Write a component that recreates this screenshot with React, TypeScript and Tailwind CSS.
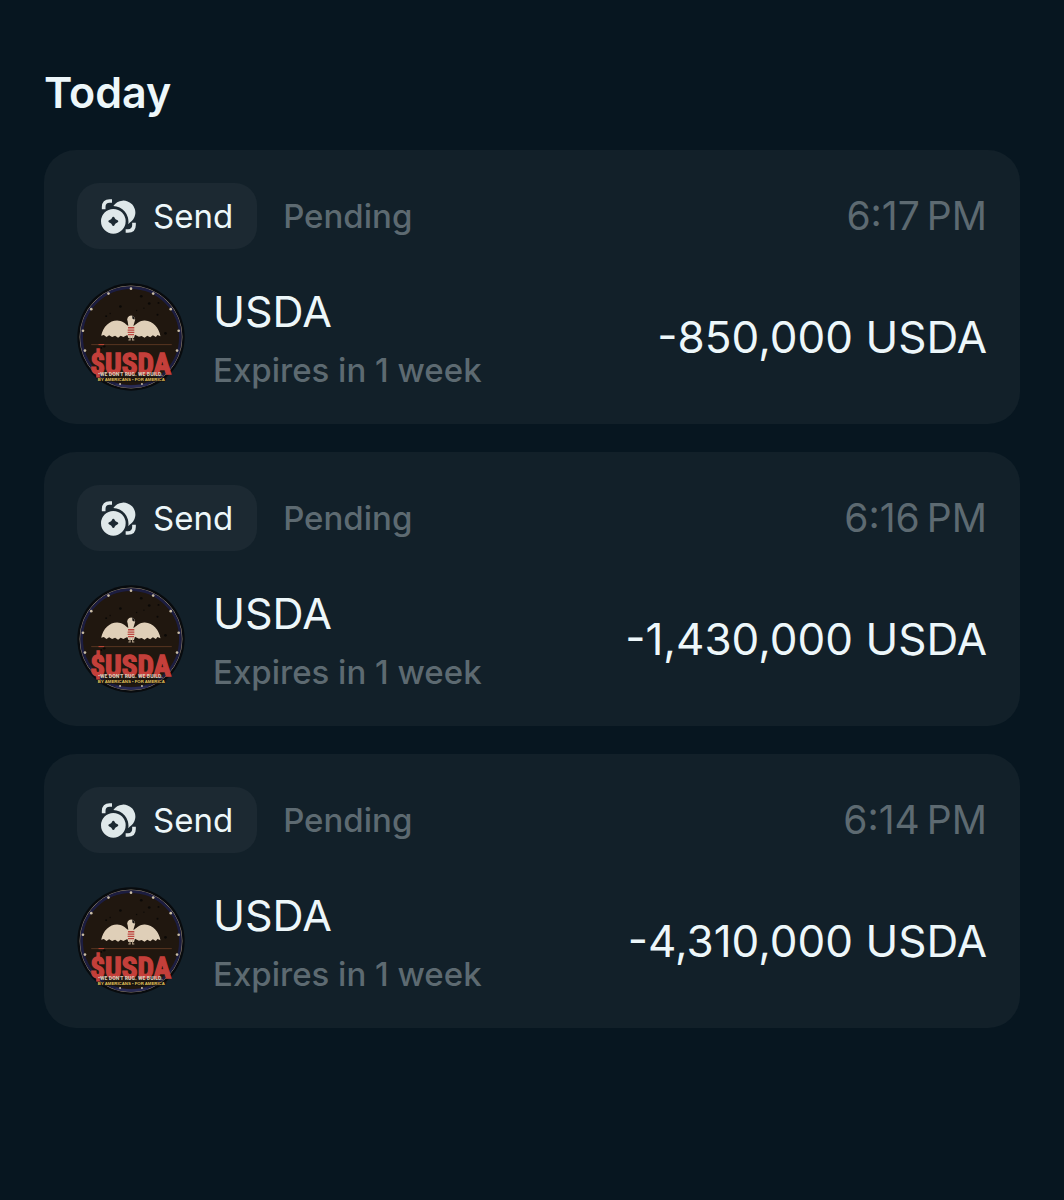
const transactions = [
  { time: "6:17\u202fPM", amount: "-850,000 USDA" },
  { time: "6:16\u202fPM", amount: "-1,430,000 USDA" },
  { time: "6:14\u202fPM", amount: "-4,310,000 USDA" },
];

const rivets = [
  [115, 54], [63, 101], [38, 166], [44, 226], [183, 39], [250, 54], [303, 101], [327, 166], [322, 226],
];

const specks = [
  [214, 62, 4], [238, 84, 4], [151, 93, 4], [266, 82, 3], [108, 122, 3], [120, 114, 2], [263, 118, 3], [287, 174, 4],
  [200, 105, 2], [102, 213, 4], [93, 218, 3], [222, 98, 2],
];

function SendIcon() {
  return (
    <svg viewBox="0 0 108 108" className="size-9 shrink-0" fill="#dfe8ea" aria-hidden="true">
      <path d="M37 24A36 36 0 1 1 85 75Q82 79 82 77A47 47 0 0 0 37 24Z" />
      <path
        fillRule="evenodd"
        d="M37 33a37 37 0 1 0 0 74a37 37 0 0 0 0-74Zm0 23q3 0 4 4q2 5 7 6q4 1 4 4q0 3-4 4q-5 1-7 6q-1 4-4 4q-3 0-4-4q-2-5-7-6q-4-1-4-4q0-3 4-4q5-1 7-6q1-4 4-4Z"
      />
      <path
        d="M8 34V27Q8 9 26 9H33M99 74V81Q99 99 81 99H74"
        fill="none"
        stroke="#dfe8ea"
        strokeWidth="11"
      />
    </svg>
  );
}

function TokenLogo() {
  return (
    <svg viewBox="20 22 326 326" className="size-[108px] shrink-0" role="img" aria-label="USDA token">
      <circle cx="183" cy="185" r="162" fill="#080b0e" />
      <circle cx="183" cy="185" r="154" fill="#20170f" stroke="#85796a" strokeWidth="3" />
      <circle cx="183" cy="185" r="149" fill="none" stroke="#1c1d40" strokeWidth="8" />
      {specks.map(([x, y, r]) => (
        <circle key={`${x}-${y}`} cx={x} cy={y} r={r} fill="#0b0907" />
      ))}
      {rivets.map(([x, y]) => (
        <circle key={`${x}-${y}`} cx={x} cy={y} r="4" fill="#c9bda6" />
      ))}

      {/* eagle */}
      <path
        d="M93 181C99 153 118 135 141 135C156 135 165 144 174 151L192 151C202 143 211 134 225 135C250 137 268 157 272 183L263 179L258 185L249 180L241 186L232 181L224 187L215 182L207 184L195 178L192 188H175L172 179L160 185L152 181L144 187L135 181L126 185L117 180L109 185L101 179Z"
        fill="#dfcfb8"
      />
      <path d="M175 152L173 138A12 12 0 1 1 194 138L190 152Z" fill="#dfcfb8" />
      <path d="M187 120Q197 125 193 133L187 129Z" fill="#171514" />
      <path d="M174 157h19M173 164h20M173 171h20M174 178h18" stroke="#bd4640" strokeWidth="4" />
      <path d="M180 182v12m8-12v12m-13 0h7m4 0h7" stroke="#b9a78f" strokeWidth="3" />
      <path d="M63 208H306" stroke="#75452a" strokeWidth="2" />
      <path d="M85 208H102" stroke="#c64735" strokeWidth="3" />

      <text x="182" y="297" textAnchor="middle" fill="#c43f3a" stroke="#c43f3a" strokeWidth="4" className="font-['Roboto_Condensed',sans-serif] text-[88px] font-bold">
        $USDA
      </text>
      <text x="181" y="304" textAnchor="middle" fill="#d6cab9" className="font-['Roboto_Condensed',sans-serif] text-[18px] font-bold">
        •WE DON'T RUG. WE BUILD.
      </text>
      <path d="M76 308H292L284 320H88Z" fill="#151313" />
      <text x="184" y="319" textAnchor="middle" fill="#e4c45a" className="font-['Liberation_Sans',sans-serif] text-[13px] font-bold">
        BY AMERICANS • FOR AMERICA
      </text>
      <path d="M136 329Q184 340 233 329" fill="none" stroke="#292b54" strokeWidth="7" />
      <circle cx="150" cy="327" r="3" fill="#c9bda6" />
      <circle cx="216" cy="327" r="3" fill="#c9bda6" />
    </svg>
  );
}

export default function App() {
  return (
    <main className="min-h-screen bg-[#071620] px-11 pt-16 pb-16 font-['Inter',sans-serif] text-[#edf7fa]">
      <h1 className="text-[43px] leading-14 font-semibold">Today</h1>

      <ul className="mt-[30px] space-y-7">
        {transactions.map((tx) => (
          <li key={tx.time} className="rounded-[32px] bg-[#122029] p-[33px]">
            <div className="flex items-center">
              <div className="flex h-[66px] items-center gap-4 rounded-[22px] bg-[#1c2932] px-6">
                <SendIcon />
                <span className="text-[33px] leading-10">Send</span>
              </div>
              <span className="ml-[26px] text-[33px] leading-10 font-medium text-[#5d6a71]">Pending</span>
              <time className="ml-auto text-[39px] leading-12 text-[#5d6a71]">{tx.time}</time>
            </div>

            <div className="mt-[34px] flex items-center">
              <TokenLogo />
              <div className="ml-7">
                <p className="text-[43px] leading-14">USDA</p>
                <p className="mt-2.5 text-[33px] leading-[42px] font-medium text-[#5d6a71]">Expires in 1 week</p>
              </div>
              <p className="ml-auto text-[44px] leading-14">{tx.amount}</p>
            </div>
          </li>
        ))}
      </ul>
    </main>
  );
}
